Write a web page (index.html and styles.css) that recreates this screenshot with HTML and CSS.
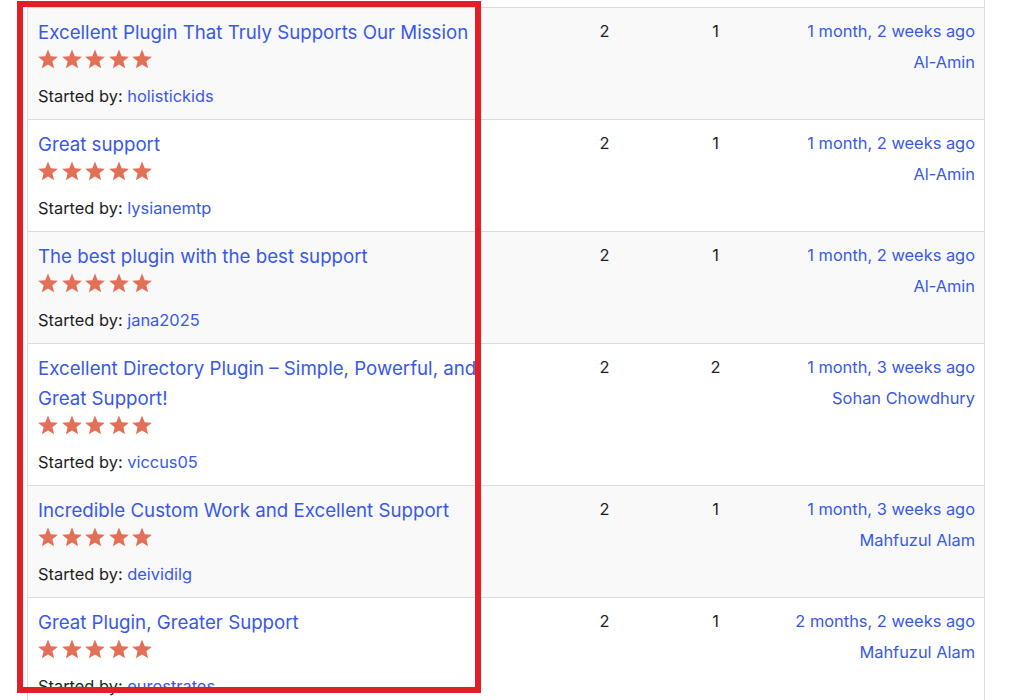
FILE: index.html
```html
<!DOCTYPE html>
<html lang="en">
<head>
    <meta charset="UTF-8">
    <meta name="viewport" content="width=device-width, initial-scale=1.0">
    <title>Reviews</title>
    <link rel="stylesheet" href="styles.css">
</head>
<body>
    <svg width="0" height="0" class="defs">
        <symbol id="star" viewBox="0 0 20 20">
            <polygon points="10,0.5 12.7,7.18 19.89,7.69 14.38,12.32 16.11,19.31 10,15.5 3.89,19.31 5.62,12.32 0.11,7.69 7.3,7.18" />
        </symbol>
    </svg>

    <div class="topics">
        <div class="prev-row"></div>

        <div class="topic odd">
            <div class="topic-title">
                <a href="#" class="title-link">Excellent Plugin That Truly Supports Our Mission</a>
                <div class="stars">
                    <svg><use href="#star"/></svg><svg><use href="#star"/></svg><svg><use href="#star"/></svg><svg><use href="#star"/></svg><svg><use href="#star"/></svg>
                </div>
                <p class="started">Started by: <a href="#">holistickids</a></p>
            </div>
            <div class="count">2</div>
            <div class="count">1</div>
            <div class="freshness">
                <a href="#">1 month, 2 weeks ago</a>
                <div class="author"><a href="#">Al-Amin</a></div>
            </div>
        </div>

        <div class="topic">
            <div class="topic-title">
                <a href="#" class="title-link">Great support</a>
                <div class="stars">
                    <svg><use href="#star"/></svg><svg><use href="#star"/></svg><svg><use href="#star"/></svg><svg><use href="#star"/></svg><svg><use href="#star"/></svg>
                </div>
                <p class="started">Started by: <a href="#">lysianemtp</a></p>
            </div>
            <div class="count">2</div>
            <div class="count">1</div>
            <div class="freshness">
                <a href="#">1 month, 2 weeks ago</a>
                <div class="author"><a href="#">Al-Amin</a></div>
            </div>
        </div>

        <div class="topic odd">
            <div class="topic-title">
                <a href="#" class="title-link">The best plugin with the best support</a>
                <div class="stars">
                    <svg><use href="#star"/></svg><svg><use href="#star"/></svg><svg><use href="#star"/></svg><svg><use href="#star"/></svg><svg><use href="#star"/></svg>
                </div>
                <p class="started">Started by: <a href="#">jana2025</a></p>
            </div>
            <div class="count">2</div>
            <div class="count">1</div>
            <div class="freshness">
                <a href="#">1 month, 2 weeks ago</a>
                <div class="author"><a href="#">Al-Amin</a></div>
            </div>
        </div>

        <div class="topic">
            <div class="topic-title">
                <a href="#" class="title-link">Excellent Directory Plugin &ndash; Simple, Powerful, and Great Support!</a>
                <div class="stars">
                    <svg><use href="#star"/></svg><svg><use href="#star"/></svg><svg><use href="#star"/></svg><svg><use href="#star"/></svg><svg><use href="#star"/></svg>
                </div>
                <p class="started">Started by: <a href="#">viccus05</a></p>
            </div>
            <div class="count">2</div>
            <div class="count">2</div>
            <div class="freshness">
                <a href="#">1 month, 3 weeks ago</a>
                <div class="author"><a href="#">Sohan Chowdhury</a></div>
            </div>
        </div>

        <div class="topic odd">
            <div class="topic-title">
                <a href="#" class="title-link">Incredible Custom Work and Excellent Support</a>
                <div class="stars">
                    <svg><use href="#star"/></svg><svg><use href="#star"/></svg><svg><use href="#star"/></svg><svg><use href="#star"/></svg><svg><use href="#star"/></svg>
                </div>
                <p class="started">Started by: <a href="#">deividilg</a></p>
            </div>
            <div class="count">2</div>
            <div class="count">1</div>
            <div class="freshness">
                <a href="#">1 month, 3 weeks ago</a>
                <div class="author"><a href="#">Mahfuzul Alam</a></div>
            </div>
        </div>

        <div class="topic">
            <div class="topic-title">
                <a href="#" class="title-link">Great Plugin, Greater Support</a>
                <div class="stars">
                    <svg><use href="#star"/></svg><svg><use href="#star"/></svg><svg><use href="#star"/></svg><svg><use href="#star"/></svg><svg><use href="#star"/></svg>
                </div>
                <p class="started">Started by: <a href="#">eurostrates</a></p>
            </div>
            <div class="count">2</div>
            <div class="count">1</div>
            <div class="freshness">
                <a href="#">2 months, 2 weeks ago</a>
                <div class="author"><a href="#">Mahfuzul Alam</a></div>
            </div>
        </div>
    </div>

    <div class="highlight"></div>
</body>
</html>
```

FILE: styles.css
```css
body {
    margin: 0;
    background: #fff;
    color: #1e1e1e;
    font-family: Inter, "Noto Sans", sans-serif;
    font-size: 16.4px;
}
a {
    color: #3858e9;
    text-decoration: none;
}
.defs {
    position: absolute;
}
.topics {
    margin-left: 27px;
    width: 958px;
    box-sizing: border-box;
    border-left: 1px solid #dcdcde;
    border-right: 1px solid #dcdcde;
}
.prev-row {
    height: 7px;
}
.topic {
    display: grid;
    grid-template-columns: 521px 111px 111px 1fr;
    border-top: 1px solid #dcdcde;
    background: #fff;
}
.topic.odd {
    background: #f9f9f9;
}
.topic-title {
    padding: 10px 10px 11px 10px;
}
.title-link {
    display: block;
    max-width: 446px;
    font-size: 18.7px;
    line-height: 30px;
}
.stars {
    display: flex;
    gap: 3.5px;
    margin-top: 1px;
    height: 20px;
}
.stars svg {
    width: 20px;
    height: 20px;
    fill: #e26f56;
}
.started {
    margin: 15px 0 0;
    line-height: 24px;
}
.count {
    text-align: center;
    padding-top: 9px;
    line-height: 28px;
}
.freshness {
    text-align: right;
    padding: 9px 9px 0 0;
    line-height: 28px;
}
.author {
    margin-top: 3px;
}
.highlight {
    position: absolute;
    left: 17px;
    top: 1px;
    width: 464px;
    height: 692px;
    box-sizing: border-box;
    border: 6px solid #e41e26;
}
```
